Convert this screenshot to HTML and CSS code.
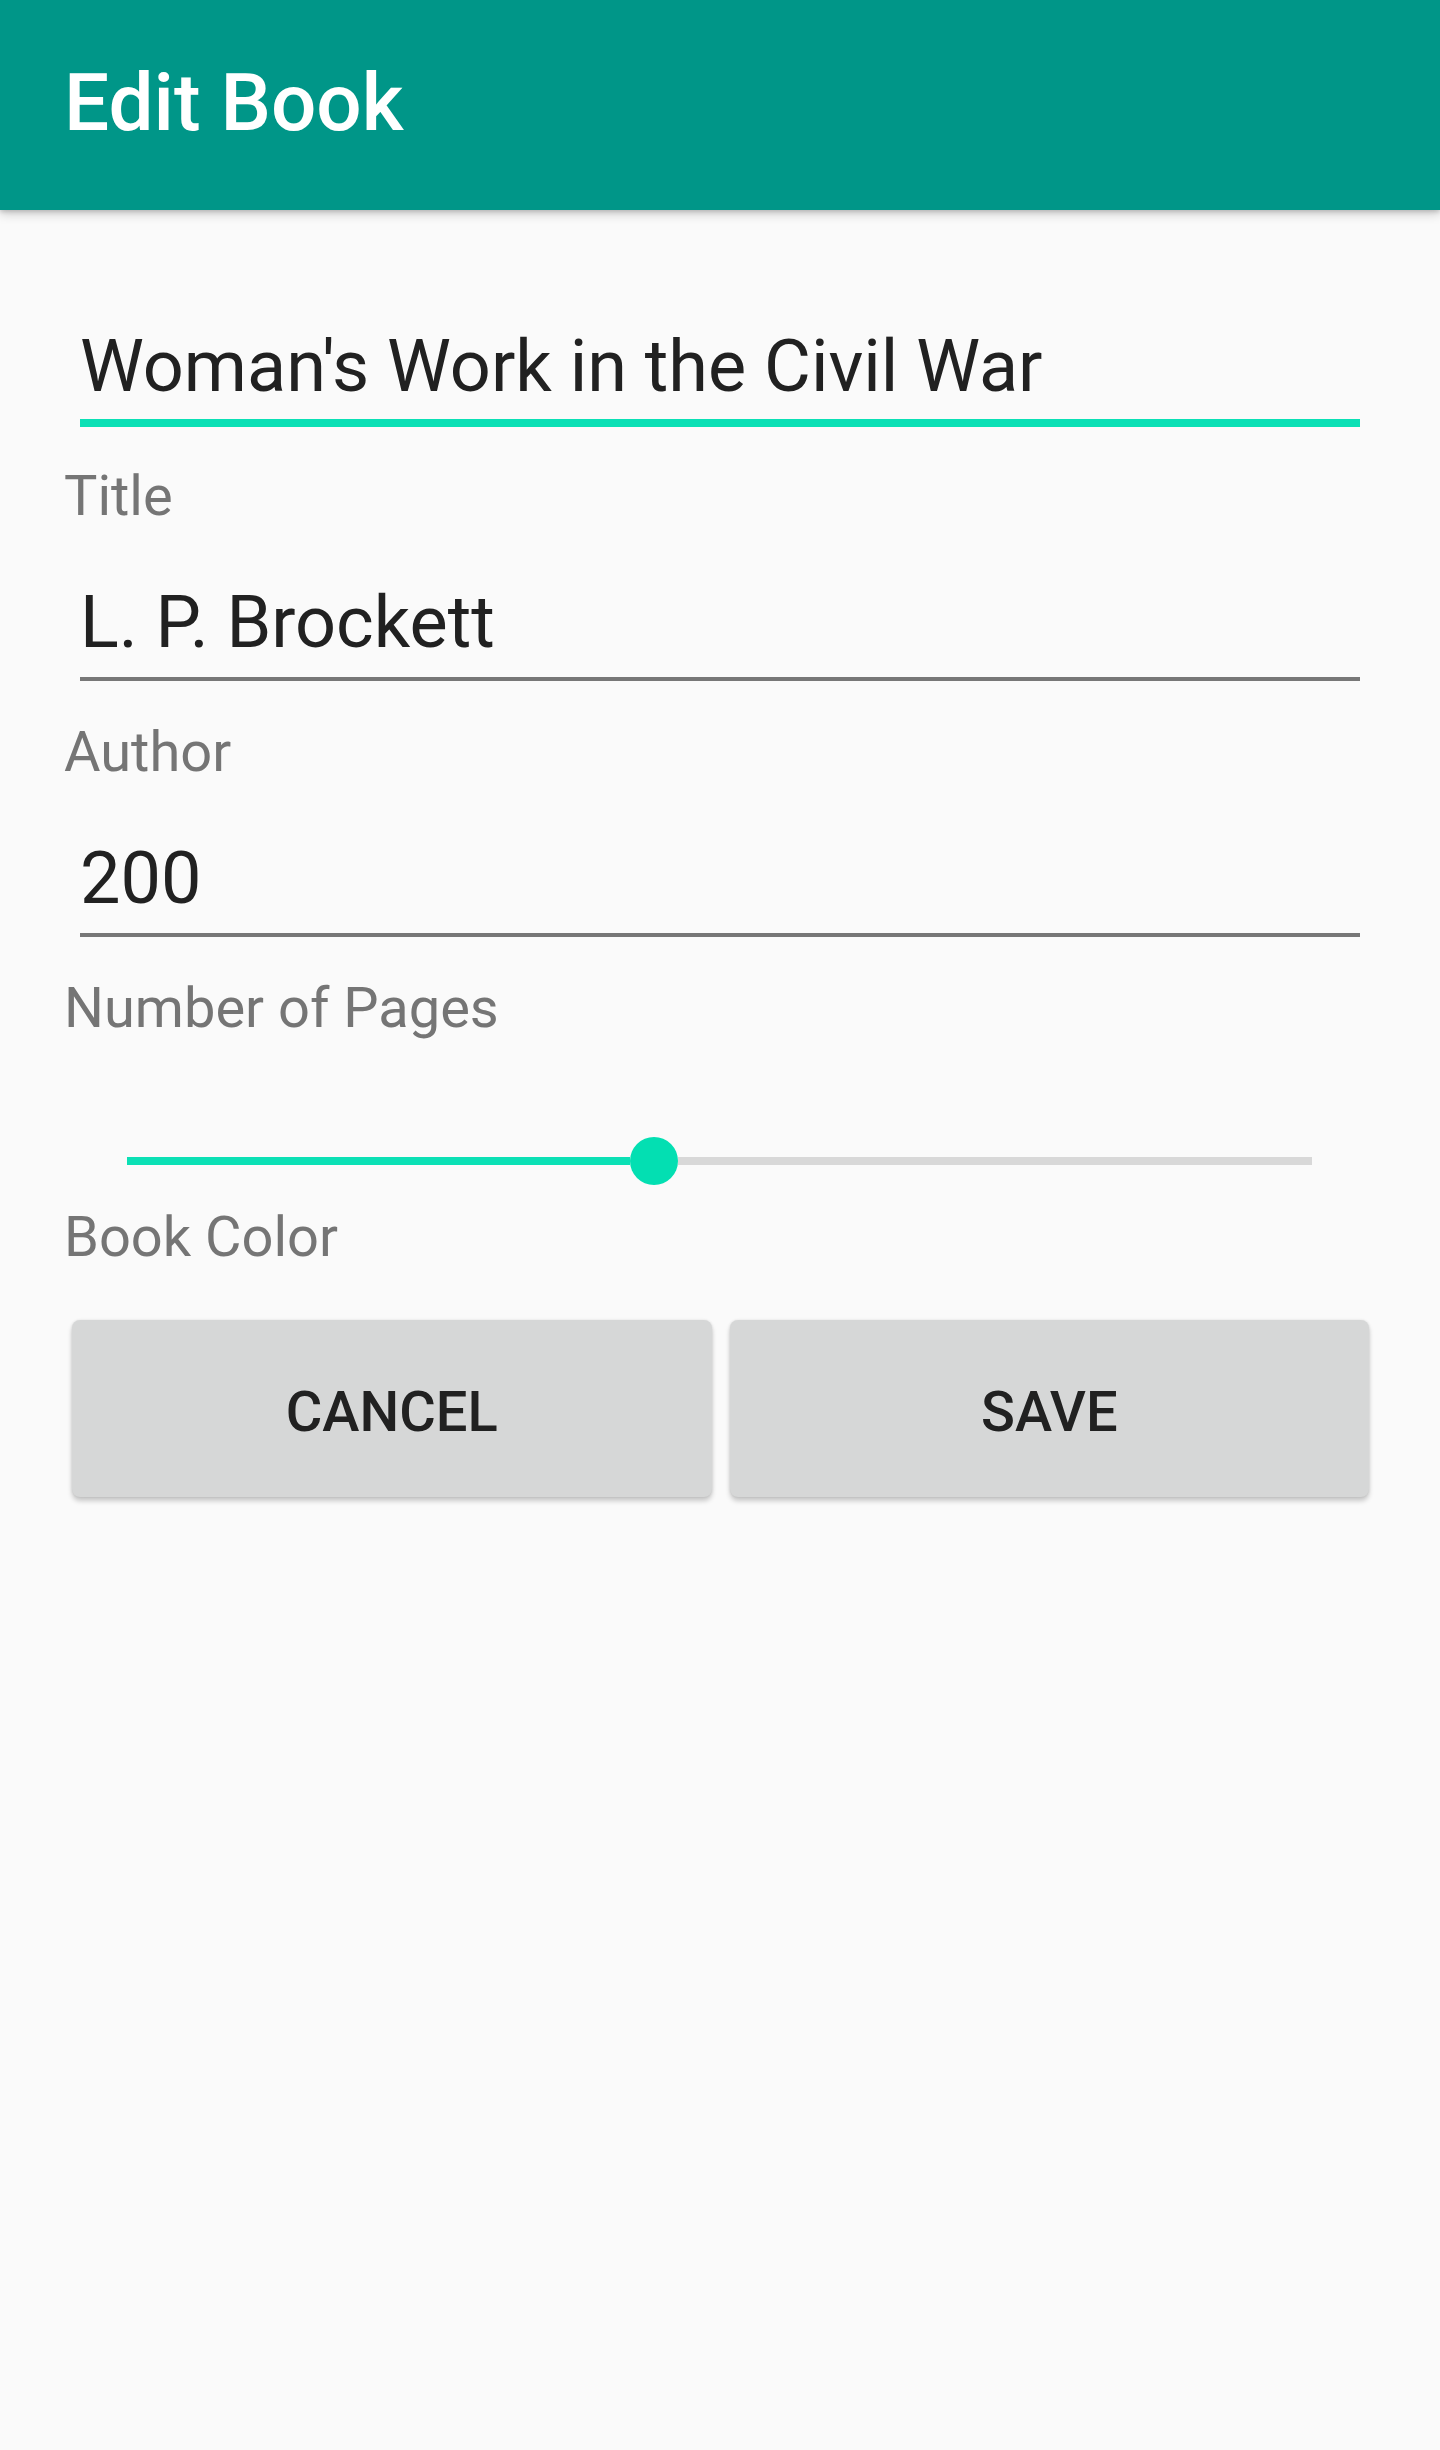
FILE: index.html
```html
<!DOCTYPE html>
<html lang="en">
<head>
<meta charset="utf-8">
<title>Edit Book</title>
<link rel="stylesheet" href="styles.css">
</head>
<body>
<header class="appbar">
  <h1 class="appbar-title">Edit Book</h1>
</header>
<main class="form">
  <div class="field">
    <div class="input input-focused">Woman's Work in the Civil War</div>
    <div class="label">Title</div>
  </div>
  <div class="field">
    <div class="input">L. P. Brockett</div>
    <div class="label">Author</div>
  </div>
  <div class="field">
    <div class="input">200</div>
    <div class="label">Number of Pages</div>
  </div>
  <div class="slider">
    <div class="track-active" style="flex-grow:503"></div>
    <div class="thumb"></div>
    <div class="track-rest" style="flex-grow:634"></div>
  </div>
  <div class="label label-color">Book Color</div>
  <div class="buttons">
    <button class="btn" type="button">CANCEL</button>
    <button class="btn" type="button">SAVE</button>
  </div>
</main>
</body>
</html>
```
FILE: styles.css
```css
html, body {
  margin: 0;
  padding: 0;
}
body {
  background: #fafafa;
  font-family: Roboto, "Noto Sans", "Liberation Sans", sans-serif;
  color: #212121;
  width: 1440px;
  min-height: 2450px;
}
.appbar {
  position: relative;
  z-index: 1;
  height: 210px;
  box-sizing: border-box;
  background: #009688;
  box-shadow: 0 4px 10px rgba(0, 0, 0, 0.18), 0 2px 4px rgba(0, 0, 0, 0.14);
  padding: 0 0 4px 64px;
}
.appbar-title {
  margin: 0;
  font-size: 80px;
  font-weight: 500;
  line-height: 206px;
  color: #ffffff;
  white-space: nowrap;
}
.form {
  padding: 107px 64px 0;
}
.input {
  margin: 0 16px 2px;
  height: 100px;
  line-height: 100px;
  font-size: 72px;
  color: #212121;
  white-space: nowrap;
  padding-bottom: 4px;
  border-bottom: 4px solid #777777;
}
.input-focused {
  margin-bottom: 0;
  padding-bottom: 2px;
  border-bottom: 8px solid #0be0b5;
}
.label {
  padding: 36px 0 44px;
  font-size: 56px;
  line-height: 66px;
  color: #757575;
  white-space: nowrap;
}
.slider {
  display: flex;
  align-items: center;
  height: 48px;
  margin: 52px 64px 0 63px;
}
.track-active {
  height: 8px;
  background: #0be0b5;
  flex-basis: 0;
}
.track-rest {
  height: 8px;
  background: #d8d8d8;
  flex-basis: 0;
}
.thumb {
  flex: none;
  width: 48px;
  height: 48px;
  border-radius: 50%;
  background: #03dfb2;
}
.label-color {
  padding: 19px 0 0;
}
.buttons {
  display: flex;
  gap: 18px;
  margin: 50px 7px 0 8px;
}
.btn {
  flex: 1 1 0;
  height: 177px;
  box-sizing: border-box;
  padding: 8px 0 0;
  border: none;
  border-radius: 8px;
  background: #d6d7d7;
  font-family: Roboto, "Noto Sans", "Liberation Sans", sans-serif;
  font-size: 56px;
  font-weight: 500;
  line-height: 169px;
  color: #212121;
  box-shadow: 0 4px 5px rgba(0, 0, 0, 0.2), 0 0 3px rgba(0, 0, 0, 0.1);
}
```
